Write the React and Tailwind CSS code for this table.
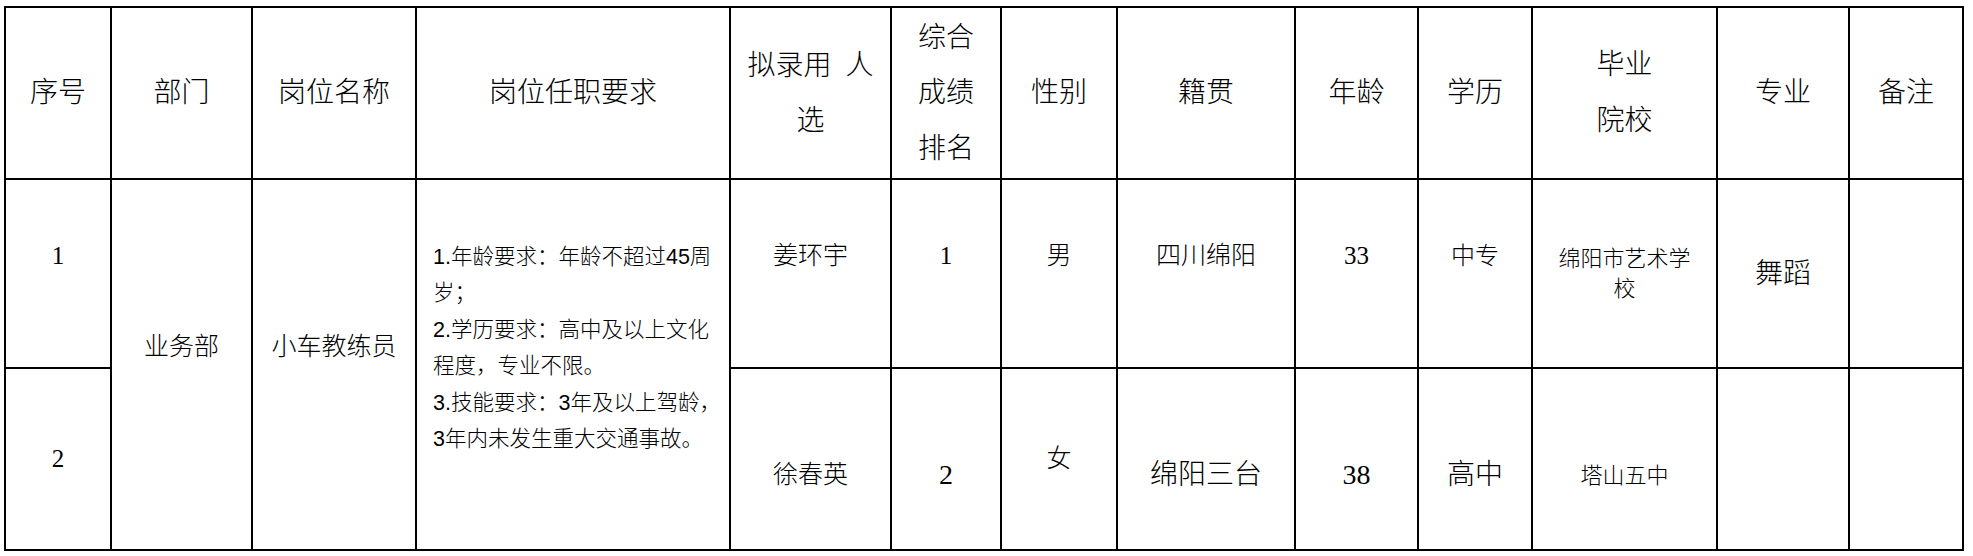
const serif = "font-['Liberation_Serif','Noto_Sans_CJK_SC',serif]"

function Cell({ className = '', children }) {
  return (
    <div className={`bg-white flex flex-col items-center justify-center text-center text-black ${className}`}>
      {children}
    </div>
  )
}

const requirements = [
  '1.年龄要求：年龄不超过45周',
  '岁；',
  '2.学历要求：高中及以上文化',
  '程度，专业不限。',
  '3.技能要求：3年及以上驾龄，',
  '3年内未发生重大交通事故。',
]

export default function App() {
  return (
    <div className={`min-h-screen bg-white pt-[6px] pl-[4px] font-light ${serif}`}>
      <div className="inline-grid grid-cols-[104px_139px_162px_312px_159px_108px_114px_176px_121px_112px_183px_130px_112px] grid-rows-[170px_187px_180px] gap-[2px] p-[2px] bg-black">
        {/* header */}
        <Cell className="text-[28px]">序号</Cell>
        <Cell className="text-[28px]">部门</Cell>
        <Cell className="text-[28px]">岗位名称</Cell>
        <Cell className="text-[28px]">岗位任职要求</Cell>
        <Cell className="text-[28px] leading-[55px]">
          <span className="whitespace-pre">拟录用  人</span>
          <span>选</span>
        </Cell>
        <Cell className="text-[28px] leading-[55.5px]">
          <span>综合</span>
          <span>成绩</span>
          <span>排名</span>
        </Cell>
        <Cell className="text-[28px]">性别</Cell>
        <Cell className="text-[28px]">籍贯</Cell>
        <Cell className="text-[28px]">年龄</Cell>
        <Cell className="text-[28px]">学历</Cell>
        <Cell className="text-[28px] leading-[56px]">
          <span>毕业</span>
          <span>院校</span>
        </Cell>
        <Cell className="text-[28px]">专业</Cell>
        <Cell className="text-[28px]">备注</Cell>

        {/* row 1 */}
        <Cell className="text-[25px] pb-[35px] text-[#1c1c5c]">1</Cell>
        <Cell className="row-span-2 text-[25px] pb-[35px]">业务部</Cell>
        <Cell className="row-span-2 text-[25px] pb-[35px]">小车教练员</Cell>
        <div className="row-span-2 bg-white flex flex-col justify-center pl-[16px] pb-[33px] text-[21.5px] leading-[36.5px] text-black font-['Liberation_Sans','Noto_Sans_CJK_SC',sans-serif]">
          {requirements.map((line) => (
            <span key={line} className="whitespace-nowrap">{line}</span>
          ))}
        </div>
        <Cell className="text-[25px] pb-[35px]">姜环宇</Cell>
        <Cell className="text-[25px] pb-[35px]">1</Cell>
        <Cell className="text-[25px] pb-[35px]">男</Cell>
        <Cell className="text-[25px] pb-[35px]">四川绵阳</Cell>
        <Cell className="text-[25px] pb-[35px]">33</Cell>
        <Cell className="text-[24px] pb-[35px]">中专</Cell>
        <Cell className="text-[22px] leading-[30px]">
          <span>绵阳市艺术学</span>
          <span>校</span>
        </Cell>
        <Cell className="text-[28px]">舞蹈</Cell>
        <Cell />

        {/* row 2 */}
        <Cell className="text-[25px] text-[#1c1c5c]">2</Cell>
        <Cell className="text-[25px] pt-[32px]">徐春英</Cell>
        <Cell className="text-[28px] pt-[32px]">2</Cell>
        <Cell className="text-[25px]">女</Cell>
        <Cell className="text-[28px] pt-[32px]">绵阳三台</Cell>
        <Cell className="text-[28px] pt-[32px]">38</Cell>
        <Cell className="text-[28px] pt-[32px]">高中</Cell>
        <Cell className="text-[22px] pt-[32px]">塔山五中</Cell>
        <Cell />
        <Cell />
      </div>
    </div>
  )
}
